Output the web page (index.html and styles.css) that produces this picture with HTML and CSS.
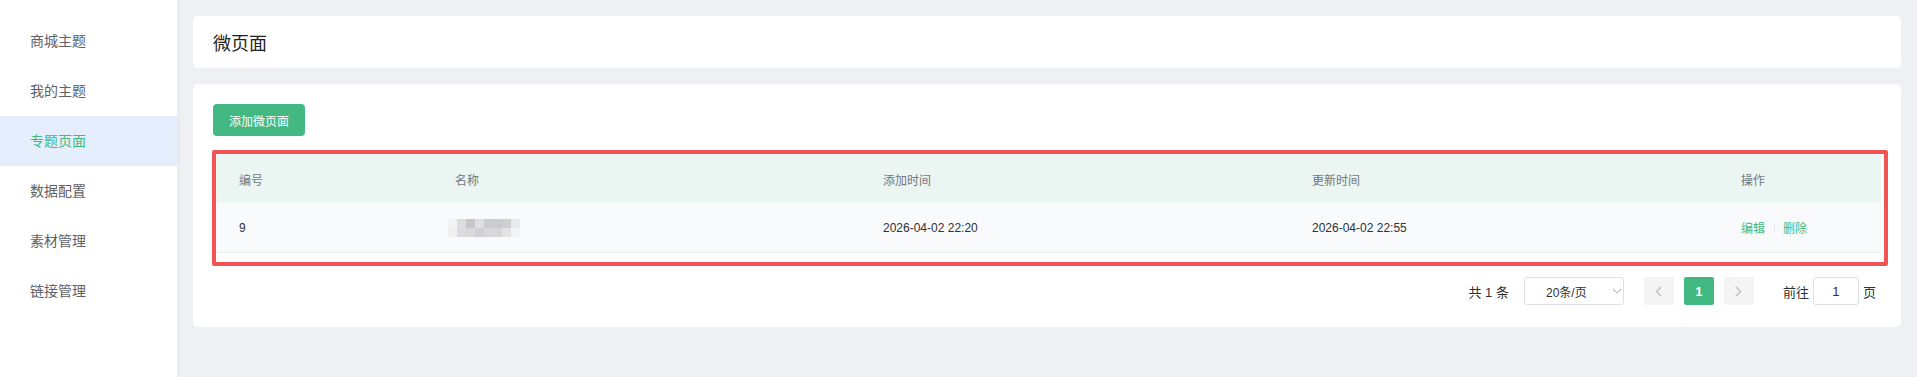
FILE: index.html
```html
<!DOCTYPE html>
<html lang="zh-CN">
<head>
    <meta charset="UTF-8">
    <meta name="viewport" content="width=device-width, initial-scale=1.0">
    <title>微页面</title>
    <link rel="stylesheet" href="styles.css">
</head>
<body>
    <!-- Menú lateral -->
    <aside class="sidebar">
        <div class="menu-item">商城主题</div>
        <div class="menu-item">我的主题</div>
        <div class="menu-item active">专题页面</div>
        <div class="menu-item">数据配置</div>
        <div class="menu-item">素材管理</div>
        <div class="menu-item">链接管理</div>
    </aside>

    <main class="main">
        <div class="card title-card">
            <h1 class="page-title">微页面</h1>
        </div>

        <div class="card list-card">
            <button class="btn-add">添加微页面</button>

            <div class="table">
                <div class="table-row table-head">
                    <div class="cell col-id">编号</div>
                    <div class="cell col-name">名称</div>
                    <div class="cell col-time">添加时间</div>
                    <div class="cell col-time">更新时间</div>
                    <div class="cell col-ops">操作</div>
                </div>
                <div class="table-row table-body">
                    <div class="cell col-id">9</div>
                    <div class="cell col-name">
                        <!-- nombre pixelado -->
                        <div class="mosaic">
                            <span style="background:#f3f3f4"></span><span style="background:#dcdde0"></span><span style="background:#c9c7c6"></span><span style="background:#e0e0e2"></span><span style="background:#cbccd1"></span><span style="background:#cbccd1"></span><span style="background:#cfcfd1"></span><span style="background:#e8e9ee"></span>
                            <span style="background:#f0f0f1"></span><span style="background:#dcdcde"></span><span style="background:#dadadc"></span><span style="background:#d1d1d4"></span><span style="background:#d7d7da"></span><span style="background:#d7d7da"></span><span style="background:#e4e4e6"></span><span style="background:#f3f3f5"></span>
                        </div>
                    </div>
                    <div class="cell col-time">2026-04-02 22:20</div>
                    <div class="cell col-time">2026-04-02 22:55</div>
                    <div class="cell col-ops">
                        <a class="link">编辑</a>
                        <span class="divider"></span>
                        <a class="link">删除</a>
                    </div>
                </div>
            </div>

            <!-- Marco rojo de anotación -->
            <div class="highlight"></div>

            <div class="pagination">
                <span class="total">共 1 条</span>
                <div class="size-select">
                    <span>20条/页</span>
                    <svg class="select-arrow" width="10" height="6" viewBox="0 0 10 6"><path d="M1 1l4 4 4-4" fill="none" stroke="#a8abb2" stroke-width="1"/></svg>
                </div>
                <button class="page-btn">
                    <svg width="7" height="11" viewBox="0 0 7 11"><path d="M6 1L1.5 5.5 6 10" fill="none" stroke="#c0c4cc" stroke-width="1.6"/></svg>
                </button>
                <button class="page-btn current">1</button>
                <button class="page-btn">
                    <svg width="7" height="11" viewBox="0 0 7 11"><path d="M1 1l4.5 4.5L1 10" fill="none" stroke="#c0c4cc" stroke-width="1.6"/></svg>
                </button>
                <span class="jump">前往</span>
                <div class="jump-input">1</div>
                <span class="jump-unit">页</span>
            </div>
        </div>
    </main>
</body>
</html>
```

FILE: styles.css
```css
body {
    display: flex;
    margin: 0;
    height: 377px;
    overflow: hidden;
    font-family: "Liberation Sans", "Noto Sans CJK SC", sans-serif;
    background-color: #eff0f4;
    color: #303133;
}

/* Menú lateral */
.sidebar {
    width: 177px;
    flex-shrink: 0;
    padding-top: 16px;
    background-color: #fff;
    box-shadow: 1px 0 5px rgba(0, 0, 0, 0.05);
    z-index: 1;
}

.menu-item {
    height: 50px;
    line-height: 50px;
    padding-left: 30px;
    font-size: 14px;
    color: #5e6166;
}

.menu-item.active {
    background-color: #e5eefd;
    color: #42b883;
}

/* Zona principal */
.main {
    flex: 1;
    padding: 16px;
}

.card {
    background-color: #fff;
    border-radius: 5px;
}

.title-card {
    height: 52px;
    display: flex;
    align-items: center;
    padding: 0 20px;
}

.page-title {
    margin: 0;
    font-size: 18px;
    font-weight: normal;
    color: #222;
}

.list-card {
    position: relative;
    margin-top: 16px;
    padding: 20px 20px 22px;
}

.btn-add {
    display: block;
    width: 92px;
    height: 32px;
    border: none;
    border-radius: 4px;
    background-color: #42b883;
    color: #fff;
    font-family: inherit;
    font-size: 12px;
    padding: 0;
}

/* Tabla */
.table {
    margin-top: 19px;
    font-size: 12px;
}

.table-row {
    display: flex;
    align-items: center;
}

.table-head {
    height: 48px;
    background-color: #ebf5f1;
    color: #74777d;
}

.table-body {
    height: 49px;
    background-color: #f9fafc;
    border-bottom: 1px solid #ebeef5;
    color: #303133;
}

.cell {
    padding-left: 26px;
    box-sizing: border-box;
}

.col-id {
    width: 216px;
}

.col-name {
    width: 428px;
}

.col-time {
    width: 429px;
}

.col-ops {
    flex: 1;
    display: flex;
    align-items: center;
}

.mosaic {
    display: grid;
    grid-template-columns: repeat(8, 9px);
    grid-auto-rows: 9px;
    margin-left: -7px;
    margin-top: 1px;
}

.link {
    color: #42b883;
    cursor: pointer;
}

.divider {
    width: 1px;
    height: 12px;
    margin: 0 8px 0 9px;
    background-color: #e4e7ed;
}

/* Marco rojo */
.highlight {
    position: absolute;
    left: 19px;
    top: 66px;
    width: 1676px;
    height: 116px;
    box-sizing: border-box;
    border: 4px solid #f45353;
    border-radius: 2px;
}

/* Paginación */
.pagination {
    display: flex;
    align-items: center;
    justify-content: flex-end;
    margin-top: 24px;
    padding-right: 5px;
    height: 28px;
    font-size: 13px;
    color: #303133;
}

.total {
    margin-right: 15px;
}

.size-select {
    width: 100px;
    height: 28px;
    box-sizing: border-box;
    border: 1px solid #dcdfe6;
    border-radius: 3px;
    display: flex;
    align-items: center;
    padding-left: 21px;
    font-size: 12px;
    color: #303133;
    margin-right: 20px;
}

.select-arrow {
    margin-left: 25px;
}

.page-btn {
    width: 30px;
    height: 28px;
    border: none;
    border-radius: 2px;
    background-color: #f4f4f5;
    margin-right: 10px;
    padding: 0;
    display: flex;
    align-items: center;
    justify-content: center;
    font-family: inherit;
    font-size: 13px;
}

.page-btn.current {
    background-color: #42b883;
    color: #fff;
    font-weight: bold;
}

.jump {
    margin-left: 19px;
    margin-right: 4px;
}

.jump-input {
    width: 46px;
    height: 28px;
    box-sizing: border-box;
    border: 1px solid #dcdfe6;
    border-radius: 3px;
    display: flex;
    align-items: center;
    justify-content: center;
}

.jump-unit {
    margin-left: 4px;
}
```
